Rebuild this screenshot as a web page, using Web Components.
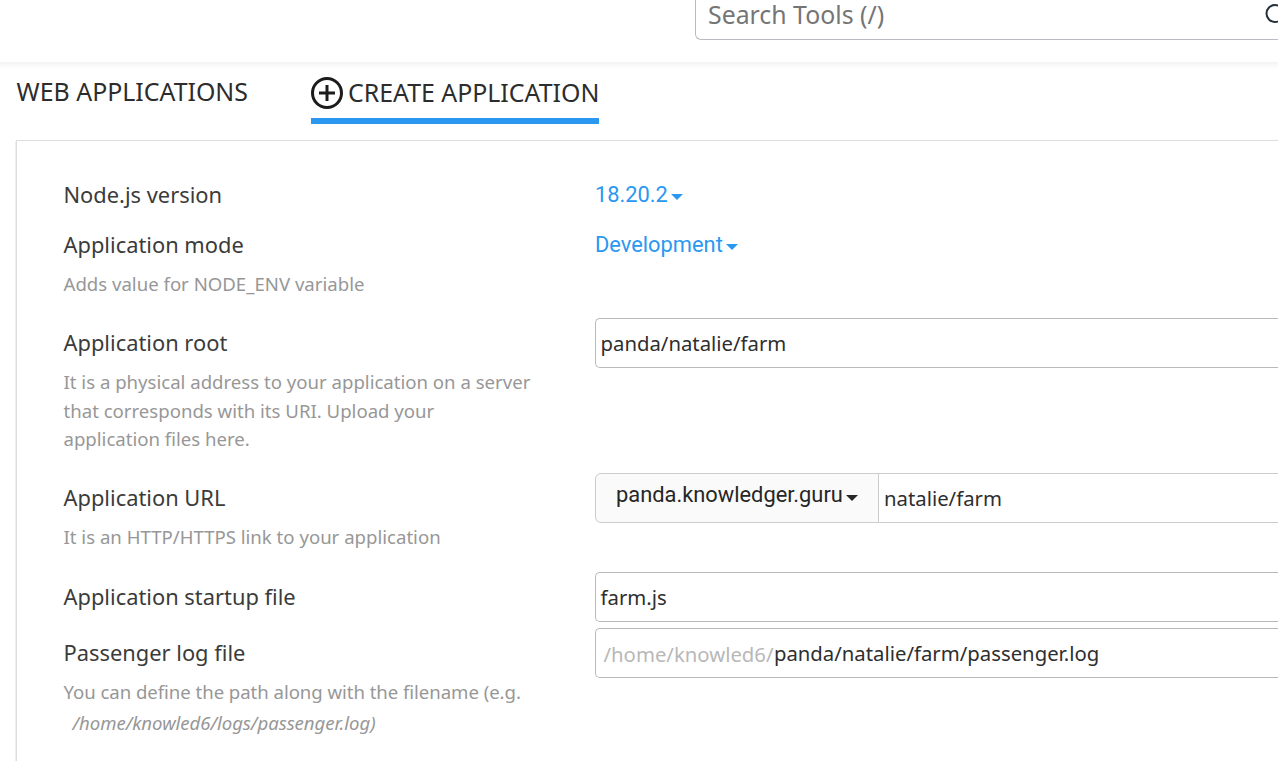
<!DOCTYPE html>
<html lang="en">
<head>
<meta charset="utf-8">
<title>Create application</title>
<style>
  html, body { margin: 0; height: 100%; overflow: hidden; background: #fff; }
  body { font-family: "Noto Sans", "Open Sans", sans-serif; color: #3b3b3b; }
</style>
</head>
<body>
<node-app-page></node-app-page>

<script>
const define = (name, html) => {
  const template = document.createElement('template');
  template.innerHTML = html;
  customElements.define(name, class extends HTMLElement {
    constructor() {
      super();
      this.attachShadow({ mode: 'open' }).append(template.content.cloneNode(true));
    }
  });
};

define('top-bar', `
  <style>
    :host { display: flex; flex: none; height: 62px; padding-left: 695px; box-sizing: border-box; background: #fff;
      box-shadow: 0 1px 6px 2px rgba(0,0,0,.06); position: relative; }
    .search { box-sizing: border-box; flex: 1; height: 40px; padding: 0 0 11px 12px;
      border: 1px solid #babac4; border-width: 0 0 1px 1px; border-radius: 0 0 0 6px; display: flex; align-items: center;
      font-size: 24.85px; line-height: 28px; color: #757575; }
    svg { margin-left: auto; flex: none; }
  </style>
  <div class="search"><span><slot></slot></span>
    <svg width="13" height="22" viewBox="0 0 13 22" fill="none" stroke="#22303c" stroke-width="2"><circle cx="10" cy="10.5" r="8.5"/></svg>
  </div>`);

define('tab-item', `
  <style>
    :host { display: flex; align-items: center; gap: 5px; height: 56px; box-sizing: border-box;
      padding-bottom: 4px; font-size: 24.9px; line-height: 36px; color: #2c2c2c; white-space: nowrap;
      border-bottom: 6px solid transparent; }
    :host([active]) { border-bottom-color: #2a98f0; padding-bottom: 1px; }
    :host([active]) span { margin-bottom: 1px; }
  </style>
  <slot name="icon"></slot><span><slot></slot></span>`);

define('plus-icon', `
  <style>:host { display: block; width: 32px; height: 32px; } svg { display: block; }</style>
  <svg width="32" height="32" viewBox="0 0 32 32" fill="none" stroke="#1c1c1c"><circle cx="16" cy="16" r="14.5" stroke-width="3"/><path d="M16 8v16M8 16h16" stroke-width="3"/></svg>`);

define('form-row', `
  <style>
    :host { display: grid; grid-template-columns: 531.5px 1fr; }
    .label { font-size: 21.87px; line-height: 50px; white-space: nowrap; }
    .hint { font-size: 18.6px; line-height: 28.5px; color: #979797; white-space: nowrap; }
    .control { display: flex; align-items: flex-start; min-width: 0; }
  </style>
  <div><div class="label"><slot name="label"></slot></div><div class="hint"><slot name="hint"></slot></div></div>
  <div class="control"><slot></slot></div>`);

define('drop-link', `
  <style>
    :host { display: flex; align-items: center; height: 49px; font: 21.85px/30px Roboto, sans-serif; color: #2a98f0; white-space: nowrap; }
    i { width: 0; height: 0; margin: 5px 0 0 3.5px; border: 6px solid transparent; border-top-color: currentColor; border-bottom: 0; }
  </style>
  <span><slot></slot></span><i></i>`);

define('text-box', `
  <style>
    :host { box-sizing: border-box; display: flex; flex: 1; align-items: center; height: 50px; padding-left: 4.5px;
      border: 1px solid #b9b9b9; border-right: 0; border-radius: 5px 0 0 5px; font-size: 20.32px; line-height: 28px; color: #2e2e2e; white-space: nowrap; background: #fff; }
    :host([joined]) { border-radius: 0; border-color: #ccc; margin-left: -1px; padding-left: 5px; }
    ::slotted([slot=prefix]) { color: #b8b8b8; padding-left: 3px; margin-right: .4px; position: relative; top: 1px; }
  </style>
  <slot name="prefix"></slot><span><slot></slot></span>`);

define('domain-button', `
  <style>
    :host { box-sizing: border-box; width: 284px; height: 50px; padding: 0 0 6px 20px; flex: none; display: flex; align-items: center;
      border: 1px solid #ccc; border-radius: 6px 0 0 6px; background: #fafafa; }
    drop-link { color: #262626; height: 42px; }
  </style>
  <drop-link><slot></slot></drop-link>`);

define('node-app-page', `
  <style>
    :host { display: flex; flex-direction: column; height: 100vh; overflow: hidden; }
    nav { display: flex; flex: none; gap: 63px; padding: 6px 0 0 16.6px; }
    main { box-sizing: border-box; flex: 1; min-height: 0; margin: 16px 0 0 16px; padding: 29px 0 0 46.5px;
      border: 1px solid #ddd; border-width: 1px 0 0 1px; box-shadow: -1px 1px 0 #eee; }
    form-row { height: var(--h); }
    .path { letter-spacing: -.05px; }
    em { display: block; line-height: 31px; padding-left: 9px; }
  </style>
  <top-bar>Search Tools (/)</top-bar>
  <nav>
    <tab-item>WEB APPLICATIONS</tab-item>
    <tab-item active><plus-icon slot="icon"></plus-icon>CREATE APPLICATION</tab-item>
  </nav>
  <main>
    <form-row style="--h:50px"><span slot="label">Node.js version</span><drop-link>18.20.2</drop-link></form-row>
    <form-row style="--h:98px"><span slot="label">Application mode</span><span slot="hint">Adds value for NODE_ENV variable</span><drop-link>Development</drop-link></form-row>
    <form-row style="--h:155px"><span slot="label">Application root</span>
      <span slot="hint">It is a physical address to your application on a server<br>that corresponds with its URI. Upload your<br>application files here.</span>
      <text-box>panda/natalie/farm</text-box></form-row>
    <form-row style="--h:99px"><span slot="label">Application URL</span><span slot="hint">It is an HTTP/HTTPS link to your application</span>
      <domain-button>panda.knowledger.guru</domain-button><text-box joined>natalie/farm</text-box></form-row>
    <form-row style="--h:56px"><span slot="label">Application startup file</span><text-box>farm.js</text-box></form-row>
    <form-row style="--h:133px"><span slot="label">Passenger log file</span>
      <span slot="hint" class="path">You can define the path along with the filename (e.g.<em>/home/knowled6/logs/passenger.log)</em></span>
      <text-box><span slot="prefix">/home/knowled6/</span>panda/natalie/farm/passenger.log</text-box></form-row>
  </main>`);
</script>
</body>
</html>
